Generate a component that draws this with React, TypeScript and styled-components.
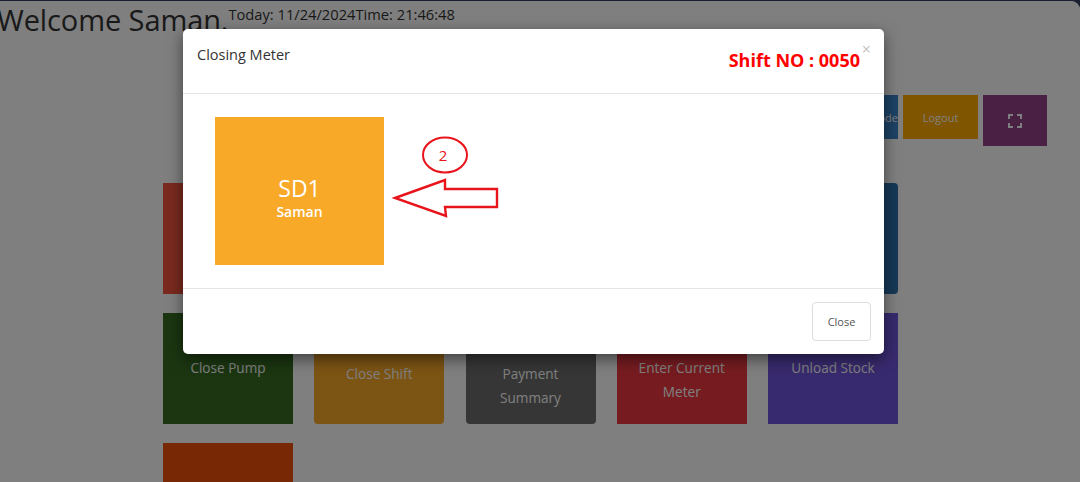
import React from "react";
import styled, { createGlobalStyle } from "styled-components";

const Global = createGlobalStyle`
  html, body { margin: 0; padding: 0; background: #1b2030; }
  body { font-family: "Open Sans", "Liberation Sans", sans-serif; overflow: hidden; }
  * { box-sizing: border-box; }
`;

const Frame = styled.div`
  position: relative;
  margin-top: 1px;
  height: 481px;
  background: #ffffff;
  border-top-right-radius: 9px;
  overflow: hidden;
`;

const Page = styled.div`
  display: flex;
  flex-direction: column;
`;

const Header = styled.div`
  display: flex;
  align-items: flex-start;
  height: 40px;
`;

const Welcome = styled.h1`
  margin: 0 0 0 -3px;
  font-size: 29px;
  font-weight: 400;
  line-height: 38px;
  color: #333;
  letter-spacing: -0.1px;
`;

const DateLine = styled.span`
  font-size: 14.7px;
  line-height: 26px;
  color: #333;
  margin-left: 0;
`;

const Toolbar = styled.div`
  display: flex;
  justify-content: flex-end;
  align-items: flex-start;
  gap: 5px;
  padding-right: 33px;
  margin-top: 54px;
  height: 88px;
`;

const ToolButton = styled.div<{ $bg: string; $w: number; $h: number; $end?: boolean }>`
  width: ${(p) => p.$w}px;
  height: ${(p) => p.$h}px;
  background: ${(p) => p.$bg};
  color: #fff;
  font-size: 11px;
  display: flex;
  align-items: center;
  justify-content: ${(p) => (p.$end ? "flex-end" : "center")};
  overflow: hidden;
  white-space: nowrap;
`;

const Grid = styled.div`
  display: grid;
  grid-template-columns: repeat(5, 130px);
  grid-auto-rows: 111px;
  column-gap: 21.25px;
  row-gap: 19px;
  margin-left: 163px;
`;

const Tile = styled.div<{ $bg: string; $top: number; $round?: boolean }>`
  background: ${(p) => p.$bg};
  border-radius: ${(p) => (p.$round ? "4px" : "0")};
  color: #fff;
  font-size: 13.6px;
  line-height: 23.5px;
  text-align: center;
  padding: ${(p) => p.$top}px 8px 0;
`;

const Overlay = styled.div`
  position: absolute;
  inset: 0;
  background: rgba(0, 0, 0, 0.5);
`;

const Modal = styled.div`
  position: absolute;
  left: 183px;
  top: 28px;
  width: 701px;
  background: #fff;
  border-radius: 5px;
  box-shadow: 0 5px 15px rgba(0, 0, 0, 0.5);
`;

const ModalHeader = styled.div`
  position: relative;
  height: 65px;
  display: flex;
  align-items: flex-start;
  justify-content: space-between;
  padding: 15px 24px 0 14px;
  border-bottom: 1px solid #e5e5e5;
`;

const Title = styled.div`
  font-size: 14.5px;
  color: #333;
  line-height: 22px;
`;

const ShiftNo = styled.div`
  font-size: 18px;
  font-weight: 700;
  color: #ff0000;
  line-height: 30px;
  margin-top: 1px;
`;

const CloseX = styled.span`
  position: absolute;
  right: 13px;
  top: 12px;
  font-size: 16px;
  line-height: 16px;
  color: #c4c4c4;
`;

const ModalBody = styled.div`
  position: relative;
  height: 195px;
  padding: 23px 32px;
  border-bottom: 1px solid #e5e5e5;
`;

const MeterTile = styled.div`
  width: 169px;
  height: 148px;
  background: #f8a928;
  color: #fff;
  display: flex;
  flex-direction: column;
  align-items: center;
  justify-content: center;
  padding-top: 13px;
`;

const MeterName = styled.div`
  font-size: 23px;
  line-height: 28px;
`;

const MeterUser = styled.div`
  font-size: 14px;
  font-weight: 600;
  line-height: 20px;
`;

const Annotation = styled.svg`
  position: absolute;
  left: 210px;
  top: 41px;
  overflow: visible;
`;

const ModalFooter = styled.div`
  height: 65px;
  display: flex;
  justify-content: flex-end;
  align-items: flex-start;
  padding: 13px 13px 0;
`;

const CloseButton = styled.button`
  width: 59px;
  height: 39px;
  background: #fff;
  border: 1px solid #ddd;
  border-radius: 4px;
  font-family: inherit;
  font-size: 11px;
  color: #555;
`;

const FullscreenIcon = () => (
  <svg width="14" height="14" viewBox="0 0 14 14" fill="none" stroke="#ffffff" strokeWidth="2">
    <path d="M1 5V1h4M9 1h4v4M13 9v4H9M5 13H1V9" />
  </svg>
);

export default function App() {
  return (
    <>
      <Global />
      <Frame>
        <Page>
          <Header>
            <Welcome>Welcome Saman.</Welcome>
            <DateLine>Today: 11/24/2024Time: 21:46:48</DateLine>
          </Header>
          <Toolbar>
            <ToolButton $bg="#3884c8" $w={80} $h={44} $end>Barcode</ToolButton>
            <ToolButton $bg="#ffaa00" $w={75} $h={44}>Logout</ToolButton>
            <ToolButton $bg="#944088" $w={64} $h={51}>
              <FullscreenIcon />
            </ToolButton>
          </Toolbar>
          <Grid>
            <Tile $bg="#f4543c" $top={44}>Open Shift</Tile>
            <Tile $bg="#2e9a4a" $top={44}>Open Pump</Tile>
            <Tile $bg="#1e88c8" $top={44}>Sales</Tile>
            <Tile $bg="#7a7a7a" $top={44}>Stock</Tile>
            <Tile $bg="#2c70ac" $top={44} $round>Reports</Tile>
            <Tile $bg="#366c22" $top={43}>Close Pump</Tile>
            <Tile $bg="#f9a828" $top={49} $round>Close Shift</Tile>
            <Tile $bg="#6c6c6c" $top={49} $round>Payment Summary</Tile>
            <Tile $bg="#ec3840" $top={43}>Enter Current Meter</Tile>
            <Tile $bg="#7054dc" $top={43}>Unload Stock</Tile>
            <Tile $bg="#f05008" $top={43}>Expenses</Tile>
          </Grid>
        </Page>
        <Overlay />
        <Modal>
          <ModalHeader>
            <Title>Closing Meter</Title>
            <ShiftNo>Shift NO : 0050</ShiftNo>
            <CloseX>×</CloseX>
          </ModalHeader>
          <ModalBody>
            <MeterTile>
              <MeterName>SD1</MeterName>
              <MeterUser>Saman</MeterUser>
            </MeterTile>
            <Annotation width="110" height="115" viewBox="0 0 110 115">
              <ellipse cx="52" cy="20" rx="22" ry="17.5" fill="none" stroke="#e8141c" strokeWidth="2" />
              <text x="50" y="26" textAnchor="middle" fontSize="15" fill="#e8141c" fontFamily="Open Sans, sans-serif">2</text>
              <polygon
                points="2,63 52,45 52,54 104,54 104,72 52,72 53,81"
                fill="#fff"
                stroke="#e8141c"
                strokeWidth="2.4"
                strokeLinejoin="miter"
              />
            </Annotation>
          </ModalBody>
          <ModalFooter>
            <CloseButton>Close</CloseButton>
          </ModalFooter>
        </Modal>
      </Frame>
    </>
  );
}
